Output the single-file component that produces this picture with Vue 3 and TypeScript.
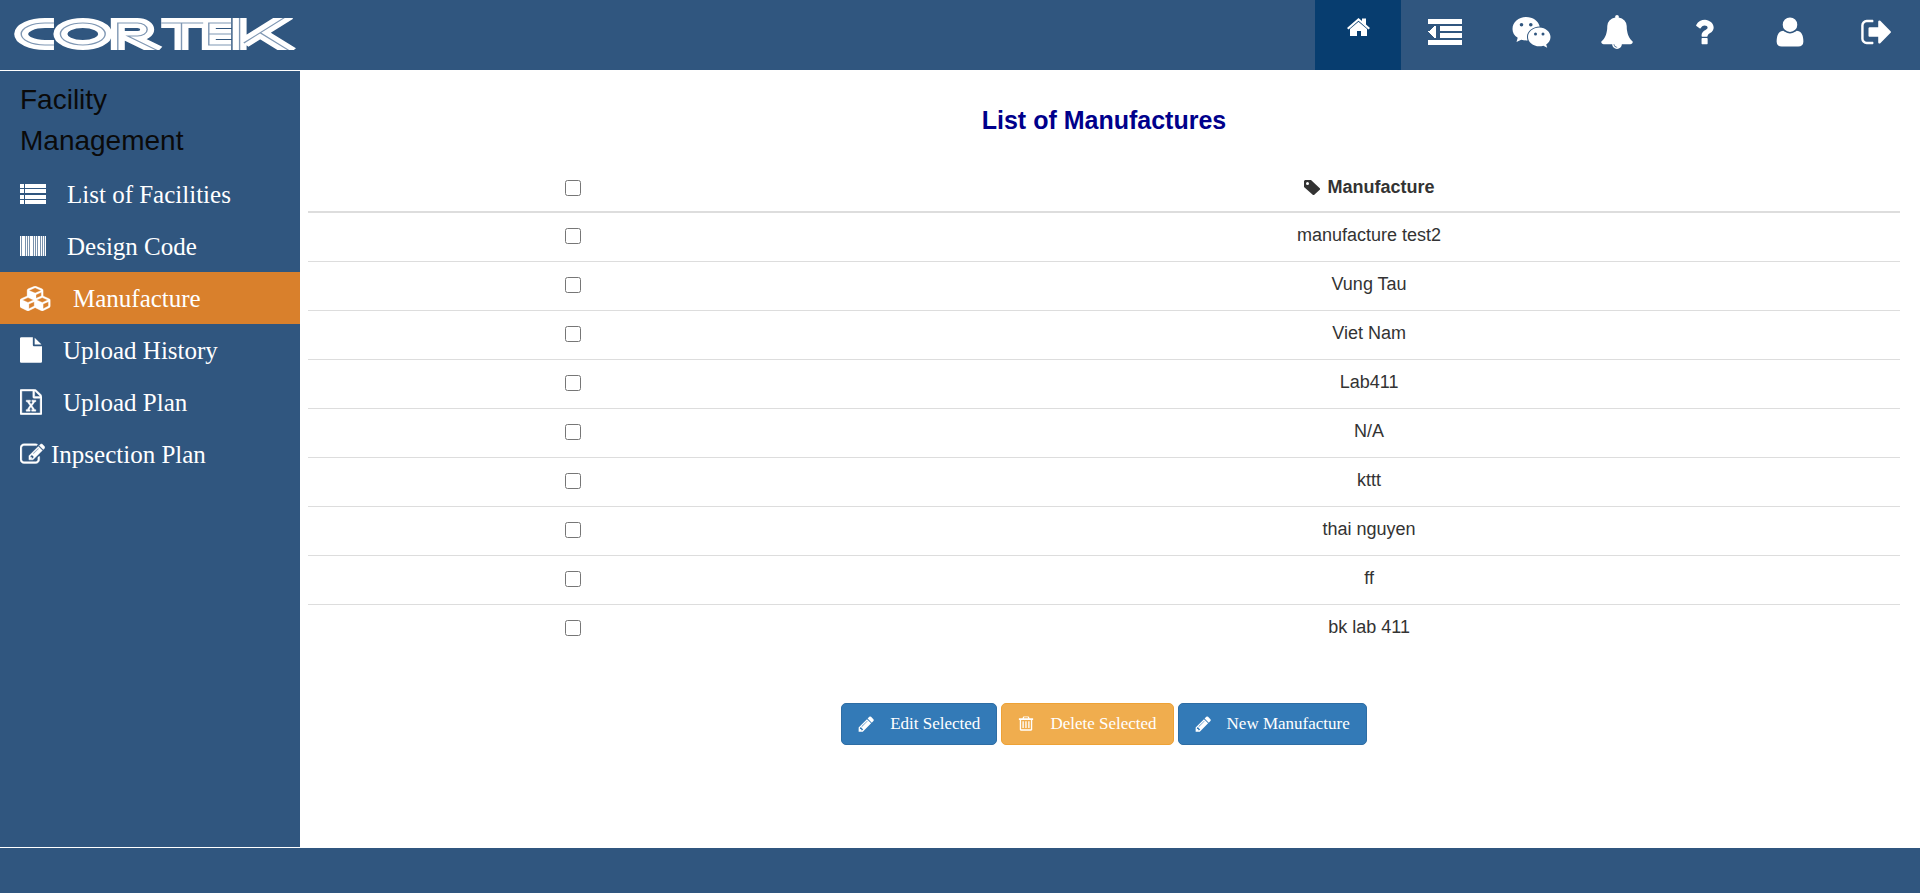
<script setup lang="ts">
import { computed, ref } from 'vue'

interface Shape {
  label: string
  viewBox: string
  width: number
  height: number
  path: string
  crisp?: boolean
}

interface NavItem extends Shape {
  active?: boolean
}

interface MenuItem extends Shape {
  active?: boolean
  tight?: boolean
  stroke?: number
}

const fa = '0 0 1792 1792'

const navItems: NavItem[] = [
  {
    label: 'Home',
    active: true,
    viewBox: '0 0 23 18',
    width: 23,
    height: 18,
    path: 'M11.500 0L15 3V.5h4V6.500L23 10l-1.500 1.500L11.500 2.800 1.500 11.500 0 10zM11.500 3.800L20 11V18h-6v-5h-4v5H3v-7z',
  },
  {
    label: 'Toggle menu',
    crisp: true,
    viewBox: '0 0 34 26',
    width: 34,
    height: 26,
    path: 'M0 0h34v5H0zM12 7h22v5H12zM12 14h22v5H12zM0 21h34v5H0zM8 7v12H6.500L.5 13.500v-1L6.500 7z',
  },
  {
    label: 'Messages',
    viewBox: '0 0 39 31',
    width: 39,
    height: 31,
    path: 'M14 0C21 0 26.700 4.200 27.700 9.600 20.500 9.800 15 14.300 15 20c0 1.200.2 2.300.6 3.400-2 .2-4.200 0-6.400-.6L4.500 25l1.200-4.200C2.200 18.600.5 15.500.5 12 .5 5.200 6.500 0 14 0zM9.500 6a1.800 1.800 0 1 0 0 3.600 1.800 1.800 0 0 0 0-3.600zm9.300 0a1.800 1.800 0 1 0 0 3.600 1.800 1.800 0 0 0 0-3.600zM27.300 10.500C33.700 10.500 38.500 15 38.500 20c0 3-1.600 5.700-4.300 7.500l1 3.300-3.800-2c-8.200 2.200-15.400-2.600-15.400-8.800 0-5.200 4.900-9.500 11.300-9.500zM23.500 15.500a1.500 1.500 0 1 0 0 3 1.500 1.500 0 0 0 0-3zm7.500 0a1.500 1.500 0 1 0 0 3 1.500 1.500 0 0 0 0-3z',
  },
  {
    label: 'Notifications',
    viewBox: fa,
    width: 34,
    height: 34,
    path: 'M912 1696q0-16-16-16-59 0-101.500-42.500t-42.500-101.500q0-16-16-16t-16 16q0 73 51.500 124.500t124.500 51.500q16 0 16-16zm816-288q0 52-38 90t-90 38h-448q0 106-75 181t-181 75-181-75-75-181h-448q-52 0-90-38t-38-90q50-42 91-88t85-119.500 74.500-158.500 50-206 19.500-260q0-152 117-282.500t307-158.500q-8-19-8-39 0-40 28-68t68-28 68 28 28 68q0 20-8 39 190 28 307 158.500t117 282.500q0 139 19.500 260t50 206 74.500 158.500 85 119.500 91 88z',
  },
  {
    label: 'Help',
    viewBox: fa,
    width: 34,
    height: 34,
    path: 'M1088 1256v240q0 16-12 28t-28 12h-240q-16 0-28-12t-12-28v-240q0-16 12-28t28-12h240q16 0 28 12t12 28zm316-600q0 54-15.500 101t-35 76.500-55 59.500-57.500 43.500-61 35.500q-41 23-68.500 65t-27.500 67q0 17-12 32.500t-28 15.500h-240q-15 0-25.500-18.500t-10.500-37.500v-45q0-83 65-156.500t143-108.500q59-27 84-56t25-76q0-42-46.500-74t-107.500-32q-65 0-108 29-35 25-107 115-13 16-31 16-12 0-25-8l-164-125q-13-10-15.500-25t5.500-28q160-266 464-266 80 0 161 31t146 83 106 127.500 41 158.500z',
  },
  {
    label: 'Account',
    viewBox: fa,
    width: 34,
    height: 34,
    path: 'M1600 1405q0 120-73 189.500t-194 69.500h-874q-121 0-194-69.500t-73-189.500q0-53 3.500-103.500t14-109 26.500-108.500 43-97.500 62-81 85.500-53.500 111.500-20q9 0 42 21.500t74.500 48 108 48 133.500 21.500 133.500-21.500 108-48 74.500-48 42-21.500q61 0 111.500 20t85.500 53.500 62 81 43 97.500 26.500 108.500 14 109 3.500 103.500zm-320-893q0 159-112.500 271.500t-271.500 112.500-271.500-112.500-112.500-271.500 112.500-271.500 271.500-112.500 271.500 112.500 112.500 271.500z',
  },
  {
    label: 'Sign out',
    viewBox: fa,
    width: 34,
    height: 34,
    path: 'M704 1440q0 4 1 20t.5 26.500-3 23.500-10 19.500-20.500 6.500h-320q-119 0-203.500-84.500t-84.500-203.500v-704q0-119 84.500-203.500t203.500-84.500h320q13 0 22.500 9.500t9.500 22.500q0 4 1 20t.5 26.500-3 23.500-10 19.500-20.500 6.500h-320q-66 0-113 47t-47 113v704q0 66 47 113t113 47h312l11.500 1 11.500 3 8 5.500 7 9 2 13.500zm928-544q0 26-19 45l-544 544q-19 19-45 19t-45-19-19-45v-288h-448q-26 0-45-19t-19-45v-384q0-26 19-45t45-19h448v-288q0-26 19-45t45-19 45 19l544 544q19 19 19 45z',
  },
]

const barcode = [
  [0, 1], [2, 3], [6, 1], [8, 1], [10, 3], [14, 1], [16, 1], [18, 2], [21, 1], [23, 1], [25, 1],
].map(([x, w]) => `M${x} 0h${w}v20h-${w}z`).join('')

const menuItems: MenuItem[] = [
  {
    label: 'List of Facilities',
    viewBox: '0 0 26 20',
    width: 26,
    height: 20,
    path: 'M0 0h4v4H0zM5 0h21v4H5zM0 5h4v4H0zM5 5h21v4H5zM0 11h4v4H0zM5 11h21v4H5zM0 16h4v4H0zM5 16h21v4H5z',
  },
  { label: 'Design Code', viewBox: '0 0 26 20', width: 26, height: 20, stroke: 0.4, path: barcode },
  {
    label: 'Manufacture',
    active: true,
    stroke: 24,
    viewBox: '0 0 2304 1792',
    width: 32,
    height: 25,
    path: 'M640 1632l384-192v-314l-384 164v342zm-64-454l404-173-404-173-404 173zm1088 454l384-192v-314l-384 164v342zm-64-454l404-173-404-173-404 173zm-448-293l384-165v-266l-384 164v267zm-64-379l441-189-441-189-441 189zm1088 518v416q0 36-19 67t-52 47l-448 224q-25 14-57 14t-57-14l-448-224q-4-2-7-4-2 2-7 4l-448 224q-25 14-57 14t-57-14l-448-224q-33-16-52-47t-19-67v-416q0-38 21.500-70t56.500-48l434-186v-400q0-38 21.500-70t56.500-48l448-192q23-10 50-10t50 10l448 192q35 16 56.500 48t21.500 70v400l434 186q36 16 57 48t21 70z',
  },
  {
    label: 'Upload History',
    viewBox: '128 0 1536 1792',
    width: 22,
    height: 26,
    path: 'M1152 512v-472q22 14 36 28l408 408q14 14 28 36h-472zm-128 32q0 40 28 68t68 28h544v1056q0 40-28 68t-68 28h-1344q-40 0-68-28t-28-68v-1600q0-40 28-68t68-28h800v544z',
  },
  {
    label: 'Upload Plan',
    stroke: 30,
    viewBox: '128 0 1536 1792',
    width: 22,
    height: 26,
    path: 'M1596 380q28 28 48 76t20 88v1152q0 40-28 68t-68 28h-1344q-40 0-68-28t-28-68v-1600q0-40 28-68t68-28h896q40 0 88 20t76 48zm-444-244v376h376q-10-29-22-41l-313-313q-12-12-41-22zm384 1528v-1024h-416q-40 0-68-28t-28-68v-416h-768v1536h1280zm-979-234v106h281v-106h-75l103-161q5-7 10-16.500t7.500-13.500 3.500-4h2q1 4 5 10 2 4 4.500 7.500t6 8 6.500 8.500l107 161h-76v106h291v-106h-68l-192-273 195-282h67v-107h-279v107h74l-103 159q-4 7-10 16.500t-9 13.500l-2 3h-2q-1-4-5-10-6-11-17-23l-106-159h76v-107h-290v107h68l189 272-194 283h-68z',
  },
  {
    label: 'Inpsection Plan',
    tight: true,
    stroke: 30,
    viewBox: fa,
    width: 25,
    height: 25,
    path: 'M888 1184l116-116-152-152-116 116v56h96v96h56zm440-720q-16-16-33 1l-350 350q-17 17-1 33t33-1l350-350q17-17 1-33zm80 594v190q0 119-84.500 203.500t-203.500 84.500h-832q-119 0-203.500-84.500t-84.500-203.500v-832q0-119 84.500-203.500t203.500-84.500h832q63 0 117 25 15 7 18 23 3 17-9 29l-49 49q-14 14-32 8-23-6-45-6h-832q-66 0-113 47t-47 113v832q0 66 47 113t113 47h832q66 0 113-47t47-113v-126q0-13 9-22l64-64q15-15 35-7t20 29zm-96-738l288 288-672 672h-288v-288zm444 132l-92 92-288-288 92-92q28-28 68-28t68 28l152 152q28 28 28 68t-28 68z',
  },
]

const pencil =
  'M491 1536l91-91-235-235-91 91v107h128v128h107zm523-928q0-22-22-22-10 0-17 7l-542 542q-7 7-7 17 0 22 22 22 10 0 17-7l542-542q7-7 7-17zm-54-192l416 416-832 832h-416v-416zm683 96q0 53-37 90l-166 166-416-416 166-165q36-38 90-38 53 0 91 38l235 234q37 39 37 91z'
const trash = 'M5 0h6l1 2h4v2h-1v11l-1 1H2l-1-1V4H0V2h4zM6 1L5.500 2h5L10 1zM2.500 4v10.500h11V4zM4 5.500h1.500V13H4zM7.200 5.500h1.500V13H7.200zM10.500 5.500H12V13h-1.500z'

const actions = [
  { label: 'Edit Selected', kind: 'primary', viewBox: '64 100 1600 1600', path: pencil },
  { label: 'Delete Selected', kind: 'warning', viewBox: '-1 0 18 17', path: trash },
  { label: 'New Manufacture', kind: 'primary', viewBox: '64 100 1600 1600', path: pencil },
]

const manufactures = [
  'manufacture test2',
  'Vung Tau',
  'Viet Nam',
  'Lab411',
  'N/A',
  'kttt',
  'thai nguyen',
  'ff',
  'bk lab 411',
]

const selected = ref<string[]>([])
const allSelected = computed({
  get: () => selected.value.length === manufactures.length,
  set: (on: boolean) => {
    selected.value = on ? [...manufactures] : []
  },
})
</script>

<template>
  <div class="page">
    <header class="topbar">
      <a class="brand" href="#" aria-label="Cortek">
        <svg class="logo" viewBox="0 0 290 44" width="290" height="44" aria-hidden="true">
          <defs>
            <clipPath id="logo-band"><rect x="0" y="6" width="208" height="32" /></clipPath>
            <g id="logo-lines" fill="none">
              <path d="M31.400 11H25A17 11 0 0 0 25 33H31.400" />
              <ellipse cx="52" cy="22" rx="16" ry="11" />
              <path d="M77 38V11H91A7 6.500 0 0 1 91 24H84L106 39" />
              <path d="M108 11H138M122.500 11V38" />
              <path d="M158 11H142V33H158M142 22H158" />
              <path d="M164 6V38M199 3L167 31M179 21L201 40" />
            </g>
          </defs>
          <g transform="scale(1.4 1)" clip-path="url(#logo-band)">
            <use href="#logo-lines" class="logo-body" />
            <use href="#logo-lines" class="logo-groove" />
          </g>
        </svg>
      </a>
      <nav class="nav" aria-label="Main">
        <a
          v-for="item in navItems"
          :key="item.label"
          href="#"
          class="nav-link"
          :class="{ active: item.active }"
          :aria-label="item.label"
        >
          <svg
            :class="{ crisp: item.crisp }"
            :viewBox="item.viewBox"
            :width="item.width"
            :height="item.height"
            aria-hidden="true"
          >
            <path :d="item.path" fill-rule="evenodd" />
          </svg>
        </a>
      </nav>
    </header>

    <div class="body">
      <aside class="sidebar">
        <h2 class="sidebar-title">Facility Management</h2>
        <a
          v-for="item in menuItems"
          :key="item.label"
          href="#"
          class="menu-link"
          :class="{ active: item.active, tight: item.tight }"
        >
          <svg :viewBox="item.viewBox" :width="item.width" :height="item.height" aria-hidden="true">
            <path :d="item.path" stroke="currentColor" :stroke-width="item.stroke ?? 0" />
          </svg>
          <span>{{ item.label }}</span>
        </a>
      </aside>

      <main class="content">
        <h1 class="title">List of Manufactures</h1>
        <table class="list">
          <thead>
            <tr>
              <th class="check">
                <input v-model="allSelected" type="checkbox" aria-label="Select all" />
              </th>
              <th>
                <span class="heading">
                  <svg viewBox="0 0 16 16" width="16" height="16" aria-hidden="true">
                    <path fill-rule="evenodd" d="M1 0h6l9 8.500v1L10 15H9L0 7V1zM3.500 2a1.500 1.500 0 1 0 0 3 1.500 1.500 0 0 0 0-3z" />
                  </svg>
                  Manufacture
                </span>
              </th>
            </tr>
          </thead>
          <tbody>
            <tr v-for="name in manufactures" :key="name">
              <td class="check">
                <input v-model="selected" type="checkbox" :value="name" :aria-label="name" />
              </td>
              <td>{{ name }}</td>
            </tr>
          </tbody>
        </table>
        <div class="actions">
          <button v-for="action in actions" :key="action.label" type="button" class="btn" :class="action.kind">
            <svg :viewBox="action.viewBox" width="16" height="16" aria-hidden="true">
              <path :d="action.path" fill-rule="evenodd" />
            </svg>
            <span>{{ action.label }}</span>
          </button>
        </div>
      </main>
    </div>

    <footer class="footer"></footer>
  </div>
</template>

<style>
body {
  margin: 0;
}
</style>

<style scoped>
.page {
  display: flex;
  flex-direction: column;
  min-height: 100vh;
  background: #fff;
  color: #333;
  font-family: "Liberation Sans", Arial, sans-serif;
  font-size: 18px;
  line-height: 25px;
}

svg {
  display: block;
  flex: none;
  fill: currentColor;
}

.crisp {
  shape-rendering: crispEdges;
}

.topbar {
  display: flex;
  justify-content: space-between;
  height: 70px;
  background: #30567f;
  border-bottom: 1px solid #fff;
}

.brand {
  padding: 12px 10px 0;
}

.logo-body {
  stroke: #fff;
  stroke-width: 10px;
}

.logo-groove {
  stroke: #7f97b3;
  stroke-width: 1px;
}

.nav {
  display: grid;
  grid-template-columns: repeat(7, 1fr);
  width: 605px;
}

.nav-link {
  display: flex;
  align-items: center;
  justify-content: center;
  padding-bottom: 6px;
  color: #fff;
}

.nav-link.active {
  padding-bottom: 16px;
  background: #073d6f;
}

.body {
  display: flex;
  flex: 1;
}

.sidebar {
  flex: none;
  width: 300px;
  background: #30567f;
}

.sidebar-title {
  margin: 0;
  padding: 8px 100px 7px 20px;
  color: #0a0a0a;
  font-size: 28px;
  font-weight: 400;
  line-height: 41px;
}

.menu-link {
  display: flex;
  align-items: center;
  gap: 21px;
  height: 52px;
  padding: 0 20px;
  color: #fff;
  font-family: "Liberation Serif", "Times New Roman", serif;
  font-size: 25px;
  text-decoration: none;
}

.menu-link.tight {
  gap: 6px;
}

.menu-link.active {
  background: #d9802c;
}

.content {
  flex: 1;
  padding: 33px 20px 40px 8px;
}

.title {
  margin: 0 0 29px;
  color: #00008b;
  font-size: 25px;
  line-height: 32px;
  text-align: center;
}

.list {
  width: 100%;
  border-collapse: separate;
  border-spacing: 0;
  table-layout: fixed;
}

.list th,
.list td {
  box-sizing: border-box;
  padding: 10px 8px 13px;
  text-align: center;
}

.list th {
  padding-bottom: 11px;
  border-bottom: 2px solid #ddd;
}

.list td {
  border-bottom: 1px solid #ddd;
}

.list tbody tr:last-child td {
  border-bottom: 0;
}

.list .check {
  width: 33.3%;
}

.list input {
  display: block;
  width: 16px;
  height: 16px;
  margin: 0 auto;
}

.heading {
  display: flex;
  align-items: center;
  justify-content: center;
  gap: 8px;
}

.actions {
  display: flex;
  justify-content: center;
  gap: 4px;
  margin-top: 50px;
}

.btn {
  display: flex;
  align-items: center;
  gap: 16px;
  height: 42px;
  padding: 0 16px;
  border: 1px solid;
  border-radius: 5px;
  color: #fff;
  font-family: "Liberation Serif", "Times New Roman", serif;
  font-size: 17px;
}

.btn.primary {
  background: #337ab7;
  border-color: #2e6da4;
}

.btn.warning {
  background: #f0ad4e;
  border-color: #eea236;
}

.footer {
  height: 45px;
  background: #30567f;
  border-top: 1px solid #fff;
}
</style>
